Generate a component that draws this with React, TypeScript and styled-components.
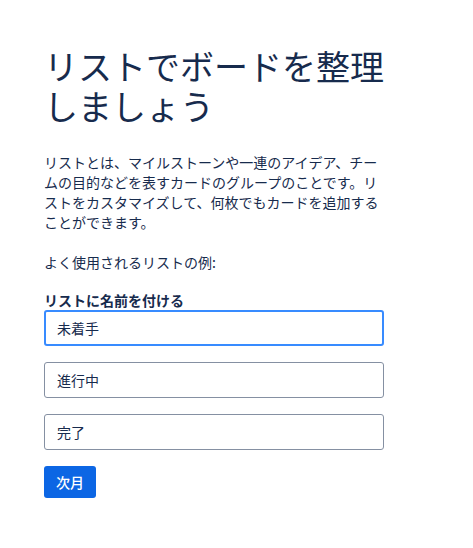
import React, { FC, useEffect, useRef } from 'react';
import styled, { createGlobalStyle } from 'styled-components';

const GlobalStyle = createGlobalStyle`
  html, body {
    margin: 0;
    padding: 0;
    background: #ffffff;
  }

  body {
    font-family: 'Noto Sans CJK JP', 'Noto Sans', sans-serif;
    color: #172b4d;
  }
`;

const Page = styled.div`
  display: flex;
  flex-direction: column;
  width: 340px;
  padding: 46px 0 0 44px;
`;

const Title = styled.h1`
  margin: 0;
  font-size: 34px;
  font-weight: 400;
  line-height: 40px;
  color: #172b4d;
`;

const Paragraph = styled.p<{ gap?: number }>`
  margin: ${({ gap = 0 }) => `${gap}px 0 0`};
  font-size: 14px;
  line-height: 20px;
  color: #172b4d;
`;

const Form = styled.form`
  display: flex;
  flex-direction: column;
  margin-top: 20px;
`;

const Label = styled.label`
  font-size: 14px;
  font-weight: 700;
  line-height: 16px;
  color: #172b4d;
  margin-bottom: 2px;
`;

const Fields = styled.div`
  display: flex;
  flex-direction: column;
  gap: 16px;
`;

const ListInput = styled.input<{ focused?: boolean }>`
  box-sizing: border-box;
  width: 340px;
  height: 36px;
  margin: 0;
  padding: ${({ focused }) => (focused ? '0 11px' : '0 12px')};
  border: ${({ focused }) => (focused ? '2px solid #388bff' : '1px solid #8590a2')};
  border-radius: 3px;
  background: #ffffff;
  font-family: inherit;
  font-size: 14px;
  color: #172b4d;
  caret-color: #172b4d;
  outline: none;
`;

const NextButton = styled.button`
  align-self: flex-start;
  height: 32px;
  margin-top: 16px;
  padding: 0 12px;
  border: none;
  border-radius: 3px;
  background: #0c66e4;
  color: #ffffff;
  font-family: inherit;
  font-size: 14px;
  font-weight: 500;
  line-height: 32px;
  cursor: pointer;
`;

const lists = ['未着手', '進行中', '完了'];

const App: FC = () => {
  const firstRef = useRef<HTMLInputElement>(null);

  useEffect(() => {
    const el = firstRef.current;
    if (el) {
      el.focus();
      el.setSelectionRange(el.value.length, el.value.length);
    }
  }, []);

  return (
    <>
      <GlobalStyle />
      <Page>
        <Title>リストでボードを整理しましょう</Title>
        <Paragraph gap={26}>
          リストとは、マイルストーンや一連のアイデア、チームの目的などを表すカードのグループのことです。リストをカスタマイズして、何枚でもカードを追加することができます。
        </Paragraph>
        <Paragraph gap={20}>よく使用されるリストの例:</Paragraph>
        <Form onSubmit={(e) => e.preventDefault()}>
          <Label htmlFor="list-0">リストに名前を付ける</Label>
          <Fields>
            {lists.map((name, i) => (
              <ListInput
                key={name}
                id={`list-${i}`}
                ref={i === 0 ? firstRef : undefined}
                focused={i === 0}
                defaultValue={name}
              />
            ))}
          </Fields>
          <NextButton type="submit">次月</NextButton>
        </Form>
      </Page>
    </>
  );
};

export default App;
